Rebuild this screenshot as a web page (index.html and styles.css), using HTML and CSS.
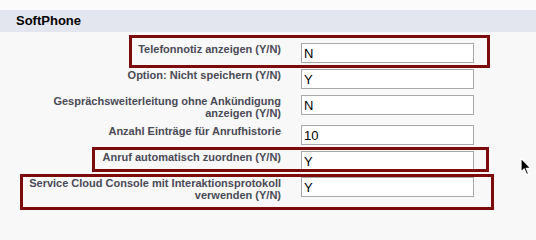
FILE: index.html
```html
<!DOCTYPE html>
<html lang="de">
<head>
<meta charset="utf-8">
<title>SoftPhone</title>
<link rel="stylesheet" href="styles.css">
</head>
<body>
<div class="page">
  <div class="topstrip"></div>
  <div class="section-head">SoftPhone</div>
  <div class="form">
    <div class="row">
      <div class="label">Telefonnotiz anzeigen (Y/N)</div>
      <div class="field"><input class="txt" type="text" value="N"></div>
    </div>
    <div class="row">
      <div class="label">Option: Nicht speichern (Y/N)</div>
      <div class="field"><input class="txt" type="text" value="Y"></div>
    </div>
    <div class="row">
      <div class="label">Gesprächsweiterleitung ohne Ankündigung anzeigen (Y/N)</div>
      <div class="field"><input class="txt" type="text" value="N"></div>
    </div>
    <div class="row">
      <div class="label">Anzahl Einträge für Anrufhistorie</div>
      <div class="field"><input class="txt" type="text" value="10"></div>
    </div>
    <div class="row">
      <div class="label">Anruf automatisch zuordnen (Y/N)</div>
      <div class="field"><input class="txt" type="text" value="Y"></div>
    </div>
    <div class="row">
      <div class="label">Service Cloud Console mit Interaktionsprotokoll verwenden (Y/N)</div>
      <div class="field"><input class="txt" type="text" value="Y"></div>
    </div>
  </div>
  <div class="mark mark-1"></div>
  <div class="mark mark-2"></div>
  <div class="mark mark-3"></div>
  <svg class="cursor" width="13" height="20" viewBox="0 0 13 20" aria-hidden="true">
    <path d="M1 1 L1 15 L4.2 12 L6.6 17.6 L8.6 16.7 L6.3 11.3 L10.8 11.3 Z" fill="#000" stroke="#fff" stroke-width="1.2" stroke-linejoin="round"/>
  </svg>
</div>
</body>
</html>
```
FILE: styles.css
```css
html, body {
  margin: 0;
  padding: 0;
  background: #f8f8f8;
}

.page {
  position: relative;
  width: 536px;
  height: 216px;
  overflow: hidden;
  font-family: Arial, "Liberation Sans", sans-serif;
}

.topstrip {
  height: 10px;
  background: #fbfbfb;
}

.section-head {
  height: 22px;
  line-height: 22px;
  background: #e3e6ef;
  padding-left: 16px;
  font-size: 13px;
  font-weight: bold;
  color: #000;
}

.form {
  padding-top: 8px;
}

.row {
  display: grid;
  grid-template-columns: 262px 173px;
  column-gap: 20px;
  padding: 3px 0 3px 19px;
  align-items: start;
}

.label {
  text-align: right;
  font-size: 11px;
  font-weight: bold;
  line-height: 12px;
  color: #4a4a56;
}

.field {
  display: flex;
}

.txt {
  box-sizing: border-box;
  width: 173px;
  height: 20px;
  margin: 0;
  padding: 0 2px;
  border: 1px solid #a8a8a8;
  background: #fff;
  font-family: Arial, "Liberation Sans", sans-serif;
  font-size: 13px;
  color: #000;
  outline: none;
}

.mark {
  position: absolute;
  box-sizing: border-box;
  border: 3px solid #7d0b0b;
}

.mark-1 { left: 129px; top: 35px; width: 361px; height: 33px; }
.mark-2 { left: 92px; top: 147px; width: 397px; height: 25px; }
.mark-3 { left: 20px; top: 174px; width: 474px; height: 36px; }

.cursor {
  position: absolute;
  left: 520px;
  top: 157px;
}
```
